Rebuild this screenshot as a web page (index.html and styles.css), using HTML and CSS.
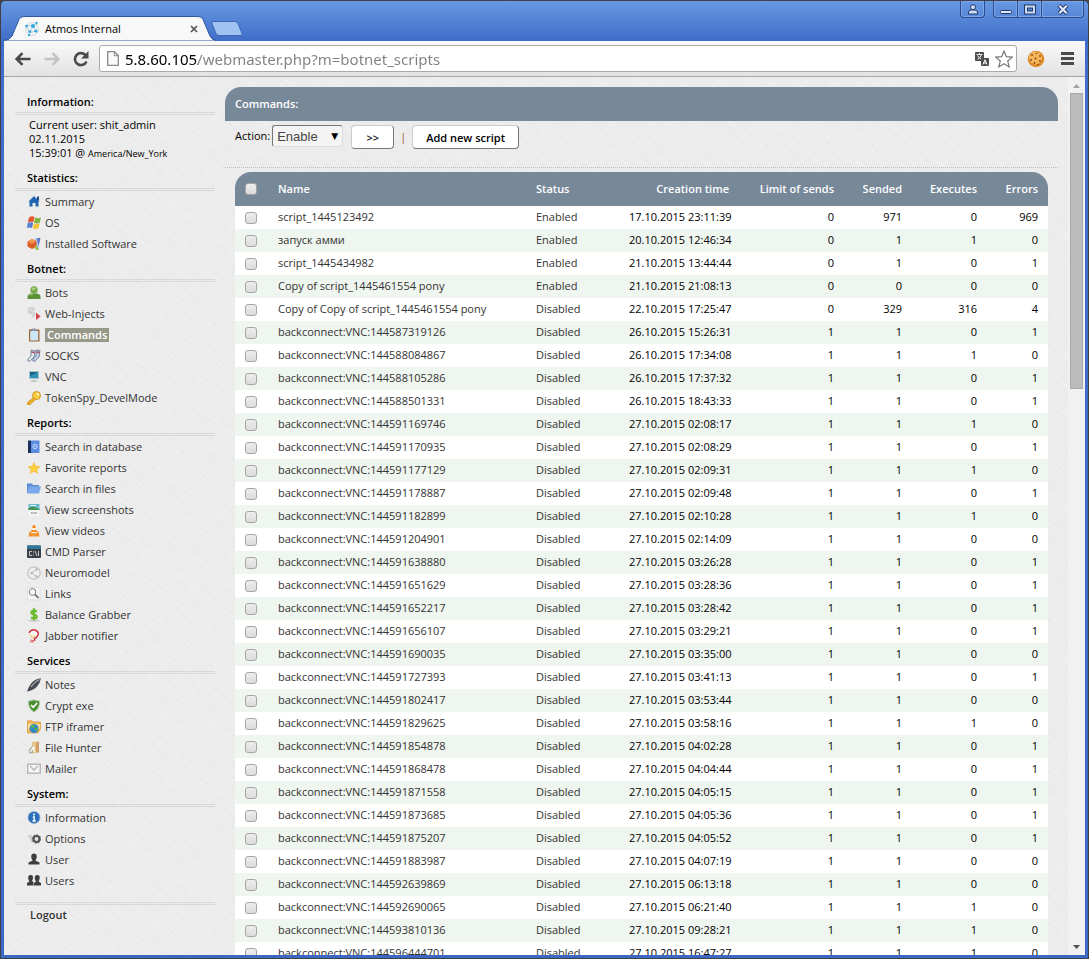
FILE: index.html
```html
<!DOCTYPE html>
<html lang="en">
<head>
    <meta charset="UTF-8">
    <meta name="viewport" content="width=device-width, initial-scale=1.0">
    <title>Atmos Internal</title>
    <link rel="stylesheet" href="styles.css">
</head>
<body>
    <div class="window">
        <header class="titlebar">
            <div class="tab">
                <svg class="tab-shape" width="212" height="25" viewBox="0 0 212 25"><path d="M0 25V24.5Q6 24 8 20L15 3.500Q16.500.5 20 .5H194Q198 .5 199 3.500L206 20Q208 24 212 24.500V25Z" fill="#f8f8f8" stroke="#2f56a0"/></svg>
                <svg class="favicon" width="16" height="16" viewBox="0 0 16 16"><circle cx="8" cy="8" r="6.500" fill="#f4f5f6" stroke="#d3d7da"/><path d="M3 4L9 5L12 10L5 12ZM9 5L5 12M13 3L9 5" fill="none" stroke="#9bbccd" stroke-width=".7"/><g fill="#2da9df"><circle cx="9" cy="5" r="2"/><circle cx="2.500" cy="5" r="1.300"/><circle cx="12" cy="10" r="1.600"/><circle cx="6" cy="10.500" r="1.300"/><circle cx="5" cy="14" r="1.200"/><circle cx="12.500" cy="2" r="1.200"/></g></svg>
                <span class="tab-title">Atmos Internal</span>
                <button class="tab-close" aria-label="Close tab"><svg width="8" height="8" viewBox="0 0 8 8"><path d="M1 1L7 7M7 1L1 7" stroke="#555" stroke-width="1.700"/></svg></button>
            </div>
            <button class="new-tab" aria-label="New tab"><svg width="32" height="16" viewBox="0 0 32 16"><path d="M3 .5H24Q26 .5 27 2.500L31 12.500Q31.500 14.500 30 14.500H8Q6 14.500 5 12.500L1 2.500Q.5 .5 3 .5Z" fill="#9fc2f2" stroke="#3d68b5"/></svg></button>
            <div class="window-buttons">
                <button class="win-btn profile" aria-label="Profile"><svg width="12" height="11" viewBox="0 0 12 11"><path d="M1.500 10V8Q1.500 6.500 4 6H8Q10.500 6.500 10.500 8V10Z" fill="#cfdcf5" stroke="#1f3767"/><circle cx="6" cy="3.200" r="2.500" fill="#cfdcf5" stroke="#1f3767"/></svg></button>
                <div class="win-group">
                    <button class="win-btn" aria-label="Minimize"><svg width="12" height="11" viewBox="0 0 12 11"><rect x=".5" y="6.500" width="11" height="3" rx="1" fill="#dfe8f8" stroke="#1f3767"/></svg></button>
                    <button class="win-btn" aria-label="Maximize"><svg width="12" height="11" viewBox="0 0 12 11"><rect x=".5" y="1" width="11" height="9" fill="#cfdcf5" stroke="#1f3767"/><rect x="3.500" y="4" width="5" height="3" fill="#5884d2" stroke="#1f3767"/></svg></button>
                    <button class="win-btn close" aria-label="Close"><svg width="12" height="11" viewBox="0 0 12 11"><path d="M2 1.500L10 9.500M10 1.500L2 9.500" stroke="#1f3767" stroke-width="4"/><path d="M2.300 1.800L9.700 9.200M9.700 1.800L2.300 9.200" stroke="#dfe8f8" stroke-width="2.200"/></svg></button>
                </div>
            </div>
        </header>

        <nav class="toolbar">
            <div class="nav-buttons">
                <button aria-label="Back"><svg width="16" height="14" viewBox="0 0 16 14"><path d="M15.500 7H2M7.500 1.200L1.700 7L7.500 12.800" fill="none" stroke="#4a4a4a" stroke-width="2.600"/></svg></button>
                <button aria-label="Forward" disabled><svg width="16" height="14" viewBox="0 0 16 14"><path d="M.5 7H14M8.500 1.200L14.300 7L8.500 12.800" fill="none" stroke="#c4c4c4" stroke-width="2.600"/></svg></button>
                <button aria-label="Reload"><svg width="16" height="16" viewBox="0 0 16 16"><path d="M12.800 4.500A6 6 0 1 0 13.500 10.500" fill="none" stroke="#4a4a4a" stroke-width="2.600"/><path d="M15.500 0V7.500H8Z" fill="#4a4a4a"/></svg></button>
            </div>
            <div class="omnibox">
                <svg width="12" height="15" viewBox="0 0 12 15"><path d="M.7 .7H7.500L11.300 4.500V14.300H.7Z" fill="#fafafa" stroke="#8a8a8a" stroke-width="1.300"/><path d="M7.300 .7V4.700H11.300" fill="none" stroke="#8a8a8a"/></svg>
                <input type="text" class="url" aria-label="Address" value="5.8.60.105/webmaster.php?m=botnet_scripts">
                <button aria-label="Translate"><svg width="14" height="14" viewBox="0 0 14 14"><rect width="9" height="9" rx="1" fill="#4d4d4d"/><path d="M1.500 2.500H7.500M4.500 1V2.500M2.500 7.500Q6 5.500 6.500 2.500M2.500 3.500Q4 6.500 7 7.500" fill="none" stroke="#fff" stroke-width=".9"/><rect x="6" y="6" width="8" height="8" rx="1" fill="#4d4d4d"/><path d="M8 12.500L10 7.700L12 12.500M8.700 11H11.300" fill="none" stroke="#fff"/></svg></button>
                <button aria-label="Bookmark"><svg width="18" height="18" viewBox="0 0 18 18"><path d="M9 1L11.300 6.700L17.200 7.100L12.700 11L14.200 16.900L9 13.700L3.800 16.900L5.300 11L.8 7.100L6.700 6.700Z" fill="#fff" stroke="#777" stroke-width="1.200"/></svg></button>
            </div>
            <button class="cookie" aria-label="Cookies"><svg width="18" height="18" viewBox="0 0 18 18"><circle cx="9" cy="9" r="8.300" fill="#e08a2a"/><circle cx="8.500" cy="8" r="6.500" fill="#f5b65a"/><g fill="#7d4217"><circle cx="5" cy="5" r=".9"/><circle cx="9.500" cy="3.500" r=".8"/><circle cx="13" cy="6" r=".9"/><circle cx="8.500" cy="8.500" r="1"/><circle cx="4" cy="10" r=".9"/><circle cx="13" cy="11" r=".9"/><circle cx="7.500" cy="13" r=".9"/><circle cx="11" cy="14.500" r=".8"/></g></svg></button>
            <button class="menu" aria-label="Menu"><svg width="13" height="13" viewBox="0 0 13 13"><path d="M0 1.500H13M0 6.500H13M0 11.500H13" stroke="#4a4a4a" stroke-width="3"/></svg></button>
        </nav>

        <div class="viewport">
            <div class="page">
                <aside class="sidebar">
                    <h2>Information:</h2>
                    <p class="user-info">Current user: shit_admin<br>02.11.2015<br>15:39:01 @ <small>America/New_York</small></p>

                    <h2>Statistics:</h2>
                    <ul>
                        <li><svg viewBox="0 0 14 14"><path d="M1.500 6.500L7 1L12.500 6.500H11.500V11.500H8.500V8H5.500V11.500H2.500V6.500Z" fill="#2166ae"/><path d="M10 1.500H12V5.500H10Z" fill="#174f8c"/></svg><a href="#">Summary</a></li>
                        <li><svg viewBox="0 0 14 14"><path d="M2 1.500Q4.500 -.5 7.500 1L6.300 6.200Q3.500 5 .8 6.500Z" fill="#e2572d"/><path d="M8.200 1.500Q11 3 14 1.500L12.700 7Q10 8 7 6.700Z" fill="#7fb344"/><path d="M.6 7Q3.500 5.700 6.200 7L5 12Q2.500 11 0 12Z" fill="#5683cf"/><path d="M7 7.200Q10 8.500 12.600 7.400L11.500 12.500Q8.500 13.800 5.700 12.300Z" fill="#f4c43b"/></svg><a href="#">OS</a></li>
                        <li><svg viewBox="0 0 14 14"><path d="M8 1H13L11.500 13L8 10Z" fill="#a9c3ec"/><path d="M10 1H13.500L11.500 9Z" fill="#5375c6"/><path d="M.5 4.500L5 2L9.500 4V9.500L5 12L.5 9.500Z" fill="#dc5a25"/><path d="M1 4.500L5 2L9 4L5 7Z" fill="#f09a4e"/><path d="M9 8L12 12L10 13.500L7 11Z" fill="#a5bd55"/></svg><a href="#">Installed Software</a></li>
                    </ul>

                    <h2>Botnet:</h2>
                    <ul>
                        <li><svg viewBox="0 0 14 14"><path d="M.5 13V11Q.5 7.500 5 7.500H9Q13.500 7.500 13.500 11V13Z" fill="#5e9238"/><circle cx="7" cy="4" r="3.700" fill="#79ab4e"/><ellipse cx="6.500" cy="3" rx="2" ry="1.400" fill="#a9cd85"/><path d="M2 9.500Q3 8.500 6 8.500" fill="none" stroke="#8fbd68"/></svg><a href="#">Bots</a></li>
                        <li><svg viewBox="0 0 14 14"><path d="M1 2Q6 0 7 2Q7 4 2 4Q1 6 6 6Q9 7 5 10" fill="none" stroke="#d0d0d0" stroke-width="2"/><path d="M9 5.500L13.500 9.500L9 13Z" fill="#d7424a"/></svg><a href="#">Web-Injects</a></li>
                        <li><svg viewBox="0 0 14 14"><rect x="2" y="1.500" width="10.500" height="12" fill="#9c6631"/><rect x="3.200" y="3" width="8" height="9.500" fill="#cde6f8"/><rect x="4.500" y=".5" width="5" height="2.500" rx="1" fill="#8b9aa7"/></svg><a href="#" class="active">Commands</a></li>
                        <li><svg viewBox="0 0 14 14"><path d="M4 1L8 2L7 8L3 12Q1 13 .5 11Q3 8 4 7Z" fill="#e6e9ef" stroke="#536a8a" stroke-width=".8"/><path d="M9 1L13 1.500L12 8L8 12Q6 13 5.500 11Q8 8 9 7Z" fill="#c6d3e6" stroke="#536a8a" stroke-width=".8"/><path d="M4.500 3L7.500 3.700M9.500 3L12.500 3.500" stroke="#b84558" stroke-width="1.300"/></svg><a href="#">SOCKS</a></li>
                        <li><svg viewBox="0 0 14 14"><rect x="2.500" y="1.500" width="9" height="7" fill="#3390b5" stroke="#a3c2cc"/><path d="M3 2H11L3 6Z" fill="#1a6283"/><path d="M5 10H9L11 12H3Z" fill="#c2cace"/></svg><a href="#">VNC</a></li>
                        <li><svg viewBox="0 0 14 14"><path d="M7 6L.5 11.500V13.500H3.500L4.500 11.500L6 11L9 8Z" fill="#eeb422" stroke="#c38519" stroke-width=".7"/><circle cx="9.500" cy="4.500" r="4" fill="#f8cd42" stroke="#c38519" stroke-width=".8"/><circle cx="11" cy="3.300" r="1" fill="#fff"/></svg><a href="#">TokenSpy_DevelMode</a></li>
                    </ul>

                    <h2>Reports:</h2>
                    <ul>
                        <li><svg viewBox="0 0 14 14"><rect x="1" y=".5" width="3" height="12.500" fill="#1c315f"/><rect x="4" y=".5" width="8.500" height="12.500" fill="#5b8cdf"/><circle cx="8" cy="6.500" r="2.200" fill="none" stroke="#c7dcfb"/><circle cx="8" cy="6.500" r=".8" fill="#dbe8fc"/></svg><a href="#">Search in database</a></li>
                        <li><svg viewBox="0 0 14 14"><path d="M7 1.500L8.700 5.300L13 5.700L9.800 8.500L10.800 12.500L7 10.300L3.200 12.500L4.200 8.500L1 5.700L5.300 5.300Z" fill="#fbce3c" stroke="#f0b42c" stroke-width=".6"/></svg><a href="#">Favorite reports</a></li>
                        <li><svg viewBox="0 0 14 14"><path d="M0 1.500H5L6 3H12V11H0Z" fill="#5c8cd6"/><path d="M1.500 4.500H14L12 11.500H0Z" fill="#7ba8ea"/></svg><a href="#">Search in files</a></li>
                        <li><svg viewBox="0 0 14 14"><path d="M2 1H12V13H2Z" fill="#f3f5f5"/><rect x="1.500" y="1" width="11" height="6" fill="#69bad0"/><path d="M1.500 7V5L6 3.500L12.500 6V7Z" fill="#43944f"/><path d="M3 2.500H9" stroke="#e9f7fa"/><path d="M4 10H10" stroke="#a5abad" stroke-width="2" stroke-dasharray="1.500 .6"/></svg><a href="#">View screenshots</a></li>
                        <li><svg viewBox="0 0 14 14"><path d="M2.500 7.500H11.500L12.500 12.500H1.500Z" fill="#f0932c"/><path d="M6 1H8L10.500 10H3.500Z" fill="#f28c1f"/><path d="M5.200 4H8.800L9.300 6H4.700ZM4.300 8H9.700L10 9.300H4Z" fill="#fff1d9"/></svg><a href="#">View videos</a></li>
                        <li><svg viewBox="0 0 14 14"><rect y=".5" width="14" height="12.500" rx="1" fill="#3b4148"/><path d="M0 1.500Q0 .5 1 .5H13Q14 .5 14 1.500V4H0Z" fill="#2c799c"/><path d="M5 6.500H2.500V10.500H5M6.500 6.500V7.500M6.500 9.500V10.500M8 6L10 11M11.500 6V11" fill="none" stroke="#d5d5d5" stroke-width=".9"/></svg><a href="#">CMD Parser</a></li>
                        <li><svg viewBox="0 0 14 14"><circle cx="7" cy="7" r="6.200" fill="#efefef" stroke="#c4c4c4" stroke-width="1.300"/><path d="M9.500 3.500L4.500 7L9.500 10.500" fill="none" stroke="#bdbdbd"/><g fill="#b8b8b8"><circle cx="9.500" cy="3.500" r="1.200"/><circle cx="4.500" cy="7" r="1.200"/><circle cx="9.500" cy="10.500" r="1.200"/></g></svg><a href="#">Neuromodel</a></li>
                        <li><svg viewBox="0 0 14 14"><rect x=".5" y=".5" width="12.500" height="12.500" rx="1" fill="#f6f6f6" stroke="#ddd"/><circle cx="5.500" cy="5" r="3.200" fill="#fafafa" stroke="#8a8a8a" stroke-width="1.100"/><path d="M8 7.500L11.500 11" stroke="#777" stroke-width="1.800"/></svg><a href="#">Links</a></li>
                        <li><svg viewBox="0 0 14 14"><ellipse cx="7" cy="12.500" rx="6" ry="1.200" fill="#c9c9c9"/><path d="M10 3.500Q7 1.700 4.800 3.300Q3.300 5.500 6.800 6.500Q10.700 7.500 9.500 9.700Q7.500 11.300 4 9.500M7 .3V12.300" fill="none" stroke="#6bb92e" stroke-width="2.200"/></svg><a href="#">Balance Grabber</a></li>
                        <li><svg viewBox="0 0 14 14"><path d="M2 4Q4 0 8 1Q12 2.500 11 6Q10 8.500 7.500 9.500V12" fill="#fafafa" stroke="#d2343c" stroke-width="1.500"/><path d="M3 5L5 9H7L8 6" fill="#ffe8bb" stroke="#e8b773" stroke-width=".7"/><path d="M4 10.500V13.500M5.800 11V13.500" stroke="#d2343c"/></svg><a href="#">Jabber notifier</a></li>
                    </ul>

                    <h2>Services</h2>
                    <ul>
                        <li><svg viewBox="0 0 14 14"><path d="M14 .3Q8 1 4.500 5Q2 8 0 13.500Q7 12 10 8.500Q13 5 14 .3Z" fill="#454a52"/><path d="M12.500 1.500Q8 3.500 4 9" fill="none" stroke="#a3a9b1" stroke-width="1.200"/></svg><a href="#">Notes</a></li>
                        <li><svg viewBox="0 0 14 14"><path d="M7 .8Q9.500 2 12.500 2Q13 9.500 7 13Q1 9.500 1.500 2Q4.500 2 7 .8Z" fill="#4b9030" stroke="#a5c79b"/><path d="M4 6L6.300 8.300L10 4" fill="none" stroke="#fff" stroke-width="1.700"/></svg><a href="#">Crypt exe</a></li>
                        <li><svg viewBox="0 0 14 14"><path d="M.5 .8H5L6 2H13.500V9L11 13H.5Z" fill="#f1bb58" stroke="#d39233" stroke-width=".7"/><path d="M1 4H13.500L12.500 9H1Z" fill="#fbdf99"/><circle cx="7" cy="8.500" r="4.500" fill="#2f86cc"/><path d="M4 6Q7 3.500 8 6Q5.500 8 4.500 9ZM8 7.500Q11 7 10.500 10Q8 11.500 7.500 9Z" fill="#5eb247"/></svg><a href="#">FTP iframer</a></li>
                        <li><svg viewBox="0 0 14 14"><path d="M5 1L12 .5V11L5 12.500Z" fill="#e8c48a"/><path d="M9 1.500L12 .5V11L9 12Z" fill="#d0a06a"/><path d="M2 12.500V9L6 3.500V12.500Z" fill="#b7b1a3"/><path d="M3.500 11L6.500 6L7.500 11" fill="none" stroke="#fff" stroke-width="1.200"/></svg><a href="#">File Hunter</a></li>
                        <li><svg viewBox="0 0 14 14"><rect x=".7" y="2.200" width="12.600" height="9" fill="#f5f5f5" stroke="#b5b5b5" stroke-width="1.400"/><path d="M3 4L7 8L11 4" fill="none" stroke="#b5b5b5" stroke-width="1.300"/></svg><a href="#">Mailer</a></li>
                    </ul>

                    <h2>System:</h2>
                    <ul>
                        <li><svg viewBox="0 0 14 14"><circle cx="7" cy="6.500" r="6" fill="#2c70bb" stroke="#8aaed5" stroke-width=".7"/><circle cx="7" cy="3.500" r="1" fill="#fff"/><path d="M5.800 6H7.200V10M5.500 10H8.700" fill="none" stroke="#fff" stroke-width="1.400"/></svg><a href="#">Information</a></li>
                        <li><svg viewBox="0 0 14 14"><path d="M1 3Q2 6 4 10L6 11L5 3Z" fill="#d1d1d1"/><circle cx="9.500" cy="7" r="3" fill="#e5e5e5" stroke="#555" stroke-width="2.200"/><circle cx="9.500" cy="7" r="4.200" fill="none" stroke="#555" stroke-dasharray="1.600 1.600"/></svg><a href="#">Options</a></li>
                        <li><svg viewBox="0 0 14 14"><path d="M7 .5Q10 .5 9.800 4Q9.500 6.500 8.300 7.500L12.500 9.500V11.500H1.500V9.500L5.700 7.500Q4.500 6.500 4.200 4Q4 .5 7 .5Z" fill="#3e3e3e"/></svg><a href="#">User</a></li>
                        <li><svg viewBox="0 0 14 14"><path d="M3.700 1Q6.300 1 6 4Q5.700 6 5 7L6.500 8V11.500H0V9L2.500 7.500Q1.300 6 1.200 4Q1 1 3.700 1Z" fill="#3e3e3e"/><path d="M10.300 1Q13 1 12.700 4Q12.400 6 11.500 7.500L14 9V11.500H7V9L9 7.500Q7.900 6 7.800 4Q7.600 1 10.300 1Z" fill="#3e3e3e"/></svg><a href="#">Users</a></li>
                    </ul>

                    <div class="logout"><a href="#">Logout</a></div>
                </aside>

                <main class="content">
                    <h1>Commands:</h1>
                    <form class="actions">
                        <label for="action">Action:</label>
                        <span class="select-wrap">
                            <select id="action"><option>Enable</option><option>Disable</option></select>
                        </span>
                        <button type="button" class="btn go">&gt;&gt;</button>
                        <span class="sep">|</span>
                        <button type="button" class="btn">Add new script</button>
                    </form>

                    <table class="scripts">
                        <thead>
                            <tr><th class="check"><input type="checkbox" aria-label="Select all"></th><th class="name">Name</th><th class="status">Status</th><th class="created">Creation time</th><th class="limit">Limit of sends</th><th class="sended">Sended</th><th class="executes">Executes</th><th class="errors">Errors</th></tr>
                        </thead>
                        <tbody>
                            <tr><td><input type="checkbox" aria-label="Select"></td><td>script_1445123492</td><td>Enabled</td><td>17.10.2015 23:11:39</td><td>0</td><td>971</td><td>0</td><td>969</td></tr>
                            <tr><td><input type="checkbox" aria-label="Select"></td><td>запуск амми</td><td>Enabled</td><td>20.10.2015 12:46:34</td><td>0</td><td>1</td><td>1</td><td>0</td></tr>
                            <tr><td><input type="checkbox" aria-label="Select"></td><td>script_1445434982</td><td>Enabled</td><td>21.10.2015 13:44:44</td><td>0</td><td>1</td><td>0</td><td>1</td></tr>
                            <tr><td><input type="checkbox" aria-label="Select"></td><td>Copy of script_1445461554 pony</td><td>Enabled</td><td>21.10.2015 21:08:13</td><td>0</td><td>0</td><td>0</td><td>0</td></tr>
                            <tr><td><input type="checkbox" aria-label="Select"></td><td>Copy of Copy of script_1445461554 pony</td><td>Disabled</td><td>22.10.2015 17:25:47</td><td>0</td><td>329</td><td>316</td><td>4</td></tr>
                            <tr><td><input type="checkbox" aria-label="Select"></td><td>backconnect:VNC:144587319126</td><td>Disabled</td><td>26.10.2015 15:26:31</td><td>1</td><td>1</td><td>0</td><td>1</td></tr>
                            <tr><td><input type="checkbox" aria-label="Select"></td><td>backconnect:VNC:144588084867</td><td>Disabled</td><td>26.10.2015 17:34:08</td><td>1</td><td>1</td><td>1</td><td>0</td></tr>
                            <tr><td><input type="checkbox" aria-label="Select"></td><td>backconnect:VNC:144588105286</td><td>Disabled</td><td>26.10.2015 17:37:32</td><td>1</td><td>1</td><td>0</td><td>1</td></tr>
                            <tr><td><input type="checkbox" aria-label="Select"></td><td>backconnect:VNC:144588501331</td><td>Disabled</td><td>26.10.2015 18:43:33</td><td>1</td><td>1</td><td>0</td><td>1</td></tr>
                            <tr><td><input type="checkbox" aria-label="Select"></td><td>backconnect:VNC:144591169746</td><td>Disabled</td><td>27.10.2015 02:08:17</td><td>1</td><td>1</td><td>1</td><td>0</td></tr>
                            <tr><td><input type="checkbox" aria-label="Select"></td><td>backconnect:VNC:144591170935</td><td>Disabled</td><td>27.10.2015 02:08:29</td><td>1</td><td>1</td><td>0</td><td>1</td></tr>
                            <tr><td><input type="checkbox" aria-label="Select"></td><td>backconnect:VNC:144591177129</td><td>Disabled</td><td>27.10.2015 02:09:31</td><td>1</td><td>1</td><td>1</td><td>0</td></tr>
                            <tr><td><input type="checkbox" aria-label="Select"></td><td>backconnect:VNC:144591178887</td><td>Disabled</td><td>27.10.2015 02:09:48</td><td>1</td><td>1</td><td>0</td><td>1</td></tr>
                            <tr><td><input type="checkbox" aria-label="Select"></td><td>backconnect:VNC:144591182899</td><td>Disabled</td><td>27.10.2015 02:10:28</td><td>1</td><td>1</td><td>1</td><td>0</td></tr>
                            <tr><td><input type="checkbox" aria-label="Select"></td><td>backconnect:VNC:144591204901</td><td>Disabled</td><td>27.10.2015 02:14:09</td><td>1</td><td>1</td><td>0</td><td>0</td></tr>
                            <tr><td><input type="checkbox" aria-label="Select"></td><td>backconnect:VNC:144591638880</td><td>Disabled</td><td>27.10.2015 03:26:28</td><td>1</td><td>1</td><td>0</td><td>1</td></tr>
                            <tr><td><input type="checkbox" aria-label="Select"></td><td>backconnect:VNC:144591651629</td><td>Disabled</td><td>27.10.2015 03:28:36</td><td>1</td><td>1</td><td>0</td><td>1</td></tr>
                            <tr><td><input type="checkbox" aria-label="Select"></td><td>backconnect:VNC:144591652217</td><td>Disabled</td><td>27.10.2015 03:28:42</td><td>1</td><td>1</td><td>0</td><td>1</td></tr>
                            <tr><td><input type="checkbox" aria-label="Select"></td><td>backconnect:VNC:144591656107</td><td>Disabled</td><td>27.10.2015 03:29:21</td><td>1</td><td>1</td><td>0</td><td>1</td></tr>
                            <tr><td><input type="checkbox" aria-label="Select"></td><td>backconnect:VNC:144591690035</td><td>Disabled</td><td>27.10.2015 03:35:00</td><td>1</td><td>1</td><td>0</td><td>0</td></tr>
                            <tr><td><input type="checkbox" aria-label="Select"></td><td>backconnect:VNC:144591727393</td><td>Disabled</td><td>27.10.2015 03:41:13</td><td>1</td><td>1</td><td>0</td><td>1</td></tr>
                            <tr><td><input type="checkbox" aria-label="Select"></td><td>backconnect:VNC:144591802417</td><td>Disabled</td><td>27.10.2015 03:53:44</td><td>1</td><td>1</td><td>0</td><td>0</td></tr>
                            <tr><td><input type="checkbox" aria-label="Select"></td><td>backconnect:VNC:144591829625</td><td>Disabled</td><td>27.10.2015 03:58:16</td><td>1</td><td>1</td><td>1</td><td>0</td></tr>
                            <tr><td><input type="checkbox" aria-label="Select"></td><td>backconnect:VNC:144591854878</td><td>Disabled</td><td>27.10.2015 04:02:28</td><td>1</td><td>1</td><td>0</td><td>1</td></tr>
                            <tr><td><input type="checkbox" aria-label="Select"></td><td>backconnect:VNC:144591868478</td><td>Disabled</td><td>27.10.2015 04:04:44</td><td>1</td><td>1</td><td>0</td><td>1</td></tr>
                            <tr><td><input type="checkbox" aria-label="Select"></td><td>backconnect:VNC:144591871558</td><td>Disabled</td><td>27.10.2015 04:05:15</td><td>1</td><td>1</td><td>0</td><td>1</td></tr>
                            <tr><td><input type="checkbox" aria-label="Select"></td><td>backconnect:VNC:144591873685</td><td>Disabled</td><td>27.10.2015 04:05:36</td><td>1</td><td>1</td><td>0</td><td>1</td></tr>
                            <tr><td><input type="checkbox" aria-label="Select"></td><td>backconnect:VNC:144591875207</td><td>Disabled</td><td>27.10.2015 04:05:52</td><td>1</td><td>1</td><td>0</td><td>1</td></tr>
                            <tr><td><input type="checkbox" aria-label="Select"></td><td>backconnect:VNC:144591883987</td><td>Disabled</td><td>27.10.2015 04:07:19</td><td>1</td><td>1</td><td>0</td><td>0</td></tr>
                            <tr><td><input type="checkbox" aria-label="Select"></td><td>backconnect:VNC:144592639869</td><td>Disabled</td><td>27.10.2015 06:13:18</td><td>1</td><td>1</td><td>0</td><td>0</td></tr>
                            <tr><td><input type="checkbox" aria-label="Select"></td><td>backconnect:VNC:144592690065</td><td>Disabled</td><td>27.10.2015 06:21:40</td><td>1</td><td>1</td><td>1</td><td>0</td></tr>
                            <tr><td><input type="checkbox" aria-label="Select"></td><td>backconnect:VNC:144593810136</td><td>Disabled</td><td>27.10.2015 09:28:21</td><td>1</td><td>1</td><td>1</td><td>0</td></tr>
                            <tr><td><input type="checkbox" aria-label="Select"></td><td>backconnect:VNC:144596444701</td><td>Disabled</td><td>27.10.2015 16:47:27</td><td>1</td><td>1</td><td>1</td><td>0</td></tr>
                        </tbody>
                    </table>
                </main>
            </div>
            <div class="scrollbar">
                <svg width="7" height="4" viewBox="0 0 7 4"><path d="M0 4L3.500 0L7 4Z" fill="#a3a3a3"/></svg>
                <div class="track"><div class="thumb"></div></div>
                <svg width="7" height="4" viewBox="0 0 7 4"><path d="M0 0H7L3.500 4Z" fill="#505050"/></svg>
            </div>
        </div>
    </div>
</body>
</html>
```
FILE: styles.css
```css
* {
    box-sizing: border-box;
}

body {
    margin: 0;
    font-family: "Open Sans", "Noto Sans", sans-serif;
    font-size: 11px;
    color: #000;
    background: #444;
}

button {
    margin: 0;
    padding: 0;
    border: none;
    background: none;
    font-family: inherit;
}

svg {
    display: block;
    flex: none;
}

/* Browser window */
.window {
    display: flex;
    flex-direction: column;
    height: 100vh;
    padding: 0 3px 3px;
    border: 1px solid #3f4048;
    border-radius: 5px 5px 0 0;
    background: linear-gradient(#6798e2 0, #3f6dc8 40px, #3b68c2 100%);
    overflow: hidden;
}

.titlebar {
    display: flex;
    align-items: flex-end;
    height: 40px;
    flex: none;
}

.tab {
    position: relative;
    display: flex;
    align-items: center;
    width: 207px;
    height: 25px;
    padding: 0 9px 0 20px;
}

.tab-shape {
    position: absolute;
    left: 0;
    top: 0;
}

.favicon,
.tab-title,
.tab-close {
    position: relative;
}

.tab-title {
    flex: 1;
    padding-left: 5px;
    font-size: 11px;
    line-height: 16px;
}

.tab-close {
    padding: 4px;
}

.new-tab {
    margin: 0 0 4px;
}

.window-buttons {
    display: flex;
    align-self: flex-start;
    gap: 8px;
    margin-left: auto;
    padding-right: 1px;
}

.win-group {
    display: flex;
}

.win-btn {
    display: flex;
    align-items: center;
    justify-content: center;
    width: 25px;
    height: 17px;
    border: 1px solid #2b4c91;
    border-top: none;
    box-shadow: inset 0 0 0 1px #7da5e6;
}

.win-btn + .win-btn {
    margin-left: -1px;
}

.win-btn.close {
    width: 43px;
}

.profile,
.win-btn:first-child {
    border-bottom-left-radius: 4px;
}

.profile,
.win-btn:last-child {
    border-bottom-right-radius: 4px;
}

.toolbar {
    display: flex;
    align-items: center;
    height: 36px;
    flex: none;
    padding: 0 11px 0 11px;
    background: linear-gradient(#f9f9f9, #e2e2e2);
    border-bottom: 1px solid #a6a6a6;
}

.nav-buttons {
    display: flex;
    align-items: center;
    gap: 13px;
    margin-right: 10px;
}

.omnibox {
    display: flex;
    align-items: center;
    flex: 1;
    gap: 6px;
    height: 27px;
    padding: 0 3px 0 7px;
    background: #fff;
    border: 1px solid #a9a9a9;
    border-radius: 3px;
}

.url {
    flex: 1;
    min-width: 0;
    height: 25px;
    padding: 0;
    border: none;
    outline: none;
    font-family: "Noto Sans", sans-serif;
    font-size: 15px;
    /* host is black, the rest of the address is grey */
    color: transparent;
    background: linear-gradient(90deg, #000 73px, #808080 73px);
    -webkit-background-clip: text;
    background-clip: text;
}

.cookie {
    margin: 0 16px 0 10px;
}

.viewport {
    display: flex;
    flex: 1;
    min-height: 0;
    background: #f1f1f1;
}

.page {
    display: flex;
    align-items: flex-start;
    flex: 1;
    gap: 10px;
    padding: 0 10px 0 11px;
    overflow: hidden;
    background:
        repeating-linear-gradient(52deg, transparent 0 9px, rgba(0, 0, 0, .008) 9px 11px, transparent 11px 17px),
        repeating-linear-gradient(-41deg, transparent 0 13px, rgba(255, 255, 255, .12) 13px 15px, transparent 15px 19px),
        repeating-linear-gradient(38deg, transparent 0 22px, rgba(255, 255, 255, .12) 22px 24px),
        #ececec;
}

.scrollbar {
    display: flex;
    flex-direction: column;
    align-items: center;
    width: 17px;
    padding: 7px 0 6px;
}

.track {
    flex: 1;
    width: 13px;
    margin: 5px 0;
}

.thumb {
    height: 35%;
    background: #bcbcbc;
    border: 1px solid #a8a8a8;
}

/* Sidebar */
.sidebar {
    width: 200px;
    flex: none;
    padding-top: 17px;
}

.sidebar h2 {
    margin: 0;
    padding: 0 12px 2px;
    border-bottom: 3px double #d8d8d8;
    font-size: 11px;
    font-weight: 600;
    line-height: 16px;
}

.user-info {
    margin: 3px 0 9px;
    padding-left: 14px;
    line-height: 14px;
}

.user-info small {
    font-size: 9px;
}

.sidebar ul {
    margin: 0 0 7px;
    padding: 0 12px;
    list-style: none;
}

.sidebar li {
    display: flex;
    align-items: center;
    gap: 4px;
    height: 21px;
}

.sidebar li svg {
    width: 14px;
    height: 14px;
}

.sidebar a {
    color: #333;
    line-height: 14px;
    text-decoration: none;
}

.sidebar a.active {
    padding: 0 2px;
    background: #96988a;
    color: #fff;
    font-weight: 600;
}

.logout {
    margin-top: 11px;
    padding: 2px 15px;
    border-top: 3px double #d8d8d8;
    font-weight: 600;
}

/* Content */
.content {
    flex: 1;
    min-width: 0;
    padding-top: 10px;
}

.content h1 {
    margin: 0;
    padding: 0 10px;
    background: #778899;
    border-radius: 16px 16px 0 0;
    color: #fff;
    font-size: 11px;
    font-weight: 600;
    line-height: 34px;
}

.actions {
    display: flex;
    align-items: flex-end;
    padding: 4px 10px 18px;
    border-bottom: 1px dotted #bbb;
}

.actions label {
    margin-bottom: 2px;
    line-height: 22px;
}

.select-wrap {
    position: relative;
    margin: 0 8px 2px 2px;
}

.select-wrap::after {
    content: "▼";
    position: absolute;
    right: 5px;
    top: 4px;
    font-family: "DejaVu Sans", sans-serif;
    font-size: 9px;
    line-height: 14px;
    pointer-events: none;
}

.actions select {
    display: block;
    appearance: none;
    width: 71px;
    height: 22px;
    padding: 0 4px;
    border: 1px solid #ddd;
    border-top-color: #777;
    border-left-color: #777;
    border-radius: 3px;
    background: #f4f4f4;
    color: #444;
    font-family: "Liberation Sans", Arial, sans-serif;
    font-size: 13px;
}

.btn {
    height: 24px;
    padding: 0 13px;
    border: 1px solid #777;
    border-top-color: #ccc;
    border-left-color: #ccc;
    border-radius: 4px;
    background: #fff;
    color: #000;
    font-size: 11px;
    font-weight: 600;
}

.btn.go {
    width: 43px;
}

.sep {
    width: 18px;
    line-height: 24px;
    text-align: center;
    color: #a0522d;
}

.scripts {
    width: calc(100% - 20px);
    margin: 4px 10px 0;
    table-layout: fixed;
    border-spacing: 0;
}

.scripts th {
    height: 34px;
    padding: 0 10px 2px;
    background: #778899;
    color: #fff;
    font-weight: 600;
    text-align: right;
    white-space: nowrap;
}

.scripts th:first-child {
    border-top-left-radius: 16px;
}

.scripts th:last-child {
    border-top-right-radius: 16px;
}

.scripts .check { width: 33px; }
.scripts .status { width: 93px; }
.scripts .created { width: 120px; }
.scripts .limit { width: 105px; }
.scripts .sended { width: 68px; }
.scripts .executes { width: 75px; }
.scripts .errors { width: 61px; }

.scripts td {
    height: 23px;
    padding: 0 10px 2px;
    background: #fff;
    text-align: right;
    white-space: nowrap;
}

.scripts th:first-child,
.scripts td:first-child {
    padding-bottom: 0;
}

.scripts tr:nth-child(even) td {
    background: #eff5ef;
}

.scripts th:nth-child(-n+3),
.scripts td:nth-child(-n+3) {
    text-align: left;
}

.scripts td:nth-child(-n+3) {
    color: #333;
}

.scripts input {
    display: block;
    appearance: none;
    width: 12px;
    height: 12px;
    margin: 0;
    border: 1px solid #a5a5a5;
    border-radius: 3px;
    background: linear-gradient(#ededed, #dcdcdc);
}
```
